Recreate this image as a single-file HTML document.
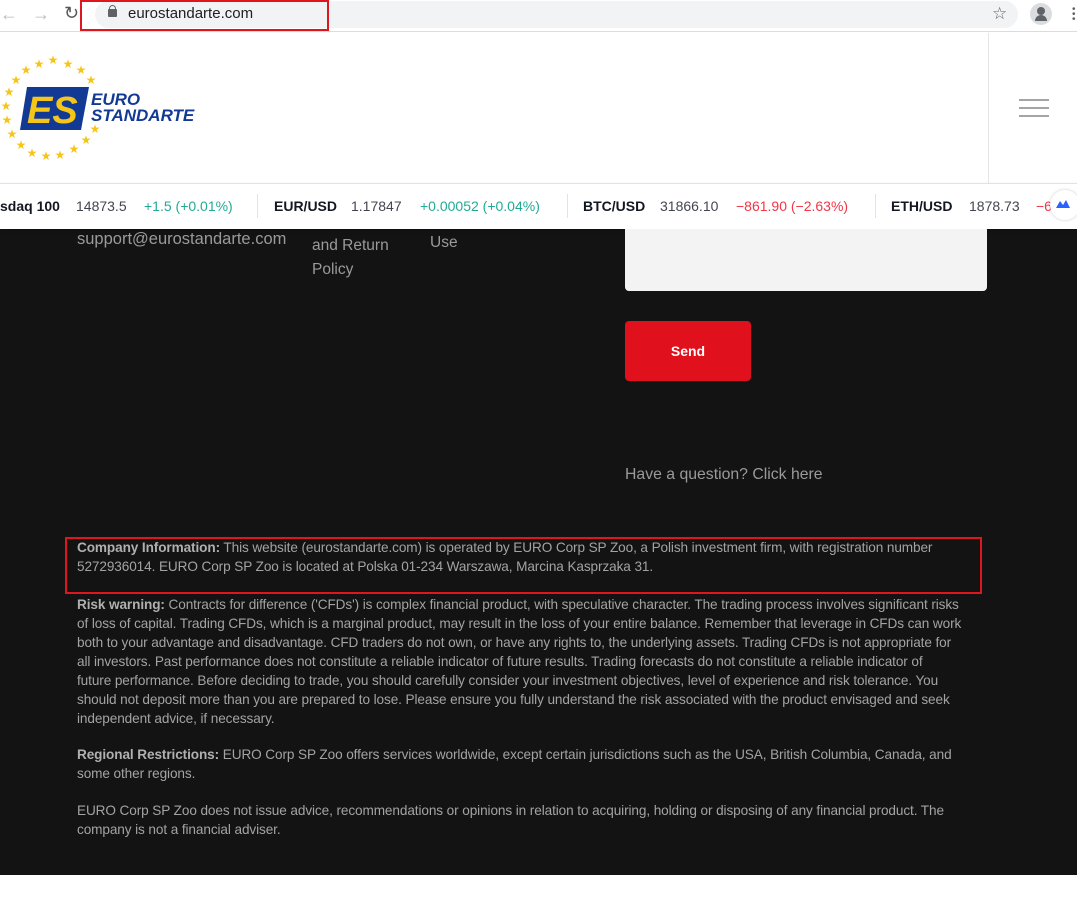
<!DOCTYPE html>
<html><head><meta charset="utf-8"><style>
*{margin:0;padding:0;box-sizing:border-box}
body{width:1077px;height:907px;background:#fff;font-family:"Liberation Sans",sans-serif;position:relative;overflow:hidden}
.a{position:absolute;white-space:nowrap}
.t{font-size:14px;top:198px}
.f{color:#a3a3a3;font-size:13.6px;left:77px;line-height:19px;letter-spacing:-0.1px}
.f b{color:#b0b0b0}
</style></head><body>
<!-- browser bar -->
<div class="a" style="left:0;top:0;width:1077px;height:32px;background:#fff;border-bottom:1px solid #dadce0"></div>
<div class="a" style="left:95px;top:1px;width:923px;height:27px;background:#f1f3f4;border-radius:14px"></div>
<div class="a" style="left:0;top:4px;font-size:18px;color:#bbb">&#8592;</div>
<div class="a" style="left:32px;top:4px;font-size:18px;color:#bbb">&#8594;</div>
<div class="a" style="left:64px;top:3px;font-size:18px;color:#555">&#8635;</div>
<div class="a" style="left:108px;top:9px;width:9px;height:8px;background:#5f6368;border-radius:1px"></div>
<div class="a" style="left:109px;top:5px;width:7px;height:6px;border:1.5px solid #5f6368;border-bottom:none;border-radius:4px 4px 0 0"></div>
<div class="a" style="left:128px;top:5px;font-size:15px;color:#202124">eurostandarte.com</div>
<div class="a" style="left:80px;top:0;width:249px;height:31px;border:2px solid #e0161f"></div>
<div class="a" style="left:992px;top:4px;font-size:17px;color:#5f6368">&#9734;</div>
<div class="a" style="left:1030px;top:3px;width:22px;height:22px;border-radius:50%;background:#dadce0"></div>
<div class="a" style="left:1037px;top:7px;width:8px;height:8px;border-radius:50%;background:#5f6368"></div>
<div class="a" style="left:1035px;top:15px;width:12px;height:6px;border-radius:6px 6px 0 0;background:#5f6368"></div>
<div class="a" style="left:1072px;top:7px;font-size:10px;line-height:5px;color:#5f6368">&#8226;<br>&#8226;<br>&#8226;</div>
<!-- header -->
<div class="a" style="left:988px;top:33px;width:1px;height:150px;background:#e5e5e5"></div>
<div class="a" style="left:1019px;top:99px;width:30px;height:2px;background:#a5a5a5"></div>
<div class="a" style="left:1019px;top:107px;width:30px;height:2px;background:#a5a5a5"></div>
<div class="a" style="left:1019px;top:115px;width:30px;height:2px;background:#a5a5a5"></div>
<svg class="a" style="left:0;top:52px" width="110" height="112" viewBox="0 0 110 112">
<g fill="#f5c518" font-size="12" font-family="DejaVu Sans" text-anchor="middle">
<text x="53" y="12">★</text><text x="68" y="16">★</text><text x="81" y="22">★</text><text x="91" y="32">★</text>
<text x="39" y="16">★</text><text x="26" y="22">★</text><text x="16" y="32">★</text><text x="9" y="44">★</text>
<text x="6" y="58">★</text><text x="7" y="72">★</text><text x="12" y="86">★</text><text x="21" y="97">★</text>
<text x="32" y="105">★</text><text x="46" y="108">★</text><text x="60" y="107">★</text><text x="74" y="101">★</text><text x="86" y="92">★</text><text x="95" y="81">★</text>
</g>
<polygon points="27,35 89,35 81,78 20,78" fill="#123a94"/>
<text x="27" y="71" font-family="Liberation Sans" font-weight="bold" font-style="italic" font-size="38" fill="#f5c518">ES</text>
</svg>
<div class="a" style="left:91px;top:92px;font-size:17px;line-height:16px;font-weight:bold;font-style:italic;color:#123a94">EURO<br>STANDARTE</div>
<!-- ticker -->
<div class="a" style="left:0;top:183px;width:1077px;height:46px;background:#fff;border-top:1px solid #e0e3eb;box-shadow:0 2px 4px rgba(0,0,0,.15)"></div>
<div class="a t" style="left:0;color:#131722;font-weight:bold">sdaq 100</div>
<div class="a t" style="left:76px;color:#434651">14873.5</div>
<div class="a t" style="left:144px;color:#22ab94">+1.5 (+0.01%)</div>
<div class="a" style="left:257px;top:194px;width:1px;height:24px;background:#e0e3eb"></div>
<div class="a t" style="left:274px;color:#131722;font-weight:bold">EUR/USD</div>
<div class="a t" style="left:351px;color:#434651">1.17847</div>
<div class="a t" style="left:420px;color:#22ab94">+0.00052 (+0.04%)</div>
<div class="a" style="left:567px;top:194px;width:1px;height:24px;background:#e0e3eb"></div>
<div class="a t" style="left:583px;color:#131722;font-weight:bold">BTC/USD</div>
<div class="a t" style="left:660px;color:#434651">31866.10</div>
<div class="a t" style="left:736px;color:#f23645">−861.90 (−2.63%)</div>
<div class="a" style="left:875px;top:194px;width:1px;height:24px;background:#e0e3eb"></div>
<div class="a t" style="left:891px;color:#131722;font-weight:bold">ETH/USD</div>
<div class="a t" style="left:969px;color:#434651">1878.73</div>
<div class="a t" style="left:1036px;color:#f23645">−6</div>
<div class="a" style="left:1050px;top:190px;width:30px;height:30px;border-radius:50%;background:#fff;box-shadow:0 0 3px rgba(0,0,0,.2)"></div>
<svg class="a" style="left:1055px;top:198px" width="16" height="12"><path d="M1 10 L5 3 L8 7 L11 2 L15 10 Z" fill="#2962ff"/></svg>
<!-- dark footer -->
<div class="a" style="left:0;top:229px;width:1077px;height:646px;background:#131313;z-index:-1"></div>
<div class="a" style="left:77px;top:230px;font-size:16.5px;color:#9a9a9a">support@eurostandarte.com</div>
<div class="a" style="left:312px;top:234px;font-size:15.5px;line-height:24px;color:#9a9a9a">and Return<br>Policy</div>
<div class="a" style="left:430px;top:234px;font-size:15.5px;color:#9a9a9a">Use</div>
<div class="a" style="left:625px;top:229px;width:362px;height:62px;background:#f3f3f3;border-radius:0 0 4px 4px"></div>
<div class="a" style="left:625px;top:321px;width:126px;height:60px;background:#e0101c;border-radius:4px;color:#fff;font-weight:bold;font-size:14px;text-align:center;line-height:60px">Send</div>
<div class="a" style="left:625px;top:466px;font-size:15.8px;color:#9a9a9a">Have a question? Click here</div>
<div class="a" style="left:65px;top:537px;width:917px;height:57px;border:2px solid #e0161f"></div>
<div class="a f" style="top:538px"><b>Company Information:</b> This website (eurostandarte.com) is operated by EURO Corp SP Zoo, a Polish investment firm, with registration number<br>5272936014. EURO Corp SP Zoo is located at Polska 01-234 Warszawa, Marcina Kasprzaka 31.</div>
<div class="a f" style="top:595px"><b>Risk warning:</b> Contracts for difference ('CFDs') is complex financial product, with speculative character. The trading process involves significant risks<br>of loss of capital. Trading CFDs, which is a marginal product, may result in the loss of your entire balance. Remember that leverage in CFDs can work<br>both to your advantage and disadvantage. CFD traders do not own, or have any rights to, the underlying assets. Trading CFDs is not appropriate for<br>all investors. Past performance does not constitute a reliable indicator of future results. Trading forecasts do not constitute a reliable indicator of<br>future performance. Before deciding to trade, you should carefully consider your investment objectives, level of experience and risk tolerance. You<br>should not deposit more than you are prepared to lose. Please ensure you fully understand the risk associated with the product envisaged and seek<br>independent advice, if necessary.</div>
<div class="a f" style="top:745px"><b>Regional Restrictions:</b> EURO Corp SP Zoo offers services worldwide, except certain jurisdictions such as the USA, British Columbia, Canada, and<br>some other regions.</div>
<div class="a f" style="top:801px">EURO Corp SP Zoo does not issue advice, recommendations or opinions in relation to acquiring, holding or disposing of any financial product. The<br>company is not a financial adviser.</div>
</body></html>
